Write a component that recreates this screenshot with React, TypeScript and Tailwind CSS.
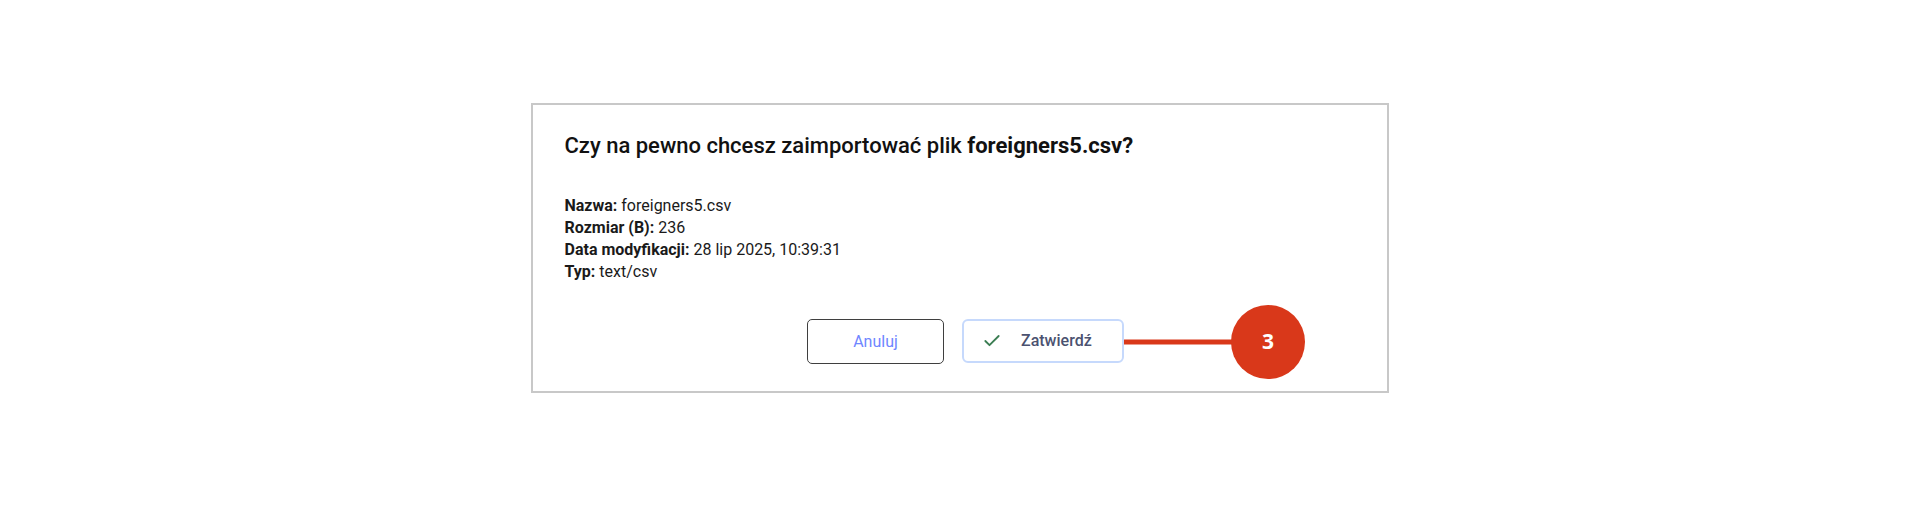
import React from 'react';
import { Check } from 'lucide-react';

const FILE = {
  name: 'foreigners5.csv',
  size: '236',
  modified: '28 lip 2025, 10:39:31',
  type: 'text/csv',
};

function InfoRow({ label, value }: { label: string; value: string }) {
  return (
    <div>
      <span className="font-bold">{label}:</span> {value}
    </div>
  );
}

export default function App() {
  return (
    <div className="w-full h-[530px] bg-white flex justify-center pt-[103px] font-['Roboto',sans-serif]">
      <div className="w-[858px] h-[290px] border-2 border-[#c8c8c8] bg-white pl-8 pr-8 pt-[27px]">
        <h2 className="text-[22px] leading-[28px] font-medium text-[#111]">
          Czy na pewno chcesz zaimportować plik <span className="font-bold">{FILE.name}?</span>
        </h2>

        <div className="mt-[35px] text-[16px] leading-[22px] text-[#1a1a1a]">
          <InfoRow label="Nazwa" value={FILE.name} />
          <InfoRow label="Rozmiar (B)" value={FILE.size} />
          <InfoRow label="Data modyfikacji" value={FILE.modified} />
          <InfoRow label="Typ" value={FILE.type} />
        </div>

        <div className="mt-[36px] flex justify-center gap-[18px] pl-[12px]">
          <button className="w-[137px] h-[45px] rounded-[5px] border border-[#3f3f3f] text-[16px] text-[#6f86ff]">
            Anuluj
          </button>
          <div className="relative">
            <button className="w-[162px] h-[44px] rounded-[6px] border-2 border-[#c6d9fc] flex items-center pl-[18px] gap-[19px] text-[16px] font-medium text-[#4b5270]">
              <Check size={20} strokeWidth={2.2} className="text-[#3b7d52]" />
              Zatwierdź
            </button>
            <div className="absolute left-full top-1/2 -translate-y-1/2 w-[110px] h-[5px] bg-[#d9381a]" />
            <div className="absolute left-[269px] -top-[14px] w-[74px] h-[74px] rounded-full bg-[#d9381a] flex items-center justify-center text-white text-[21px] font-bold font-['Open_Sans',sans-serif]">
              3
            </div>
          </div>
        </div>
      </div>
    </div>
  );
}
